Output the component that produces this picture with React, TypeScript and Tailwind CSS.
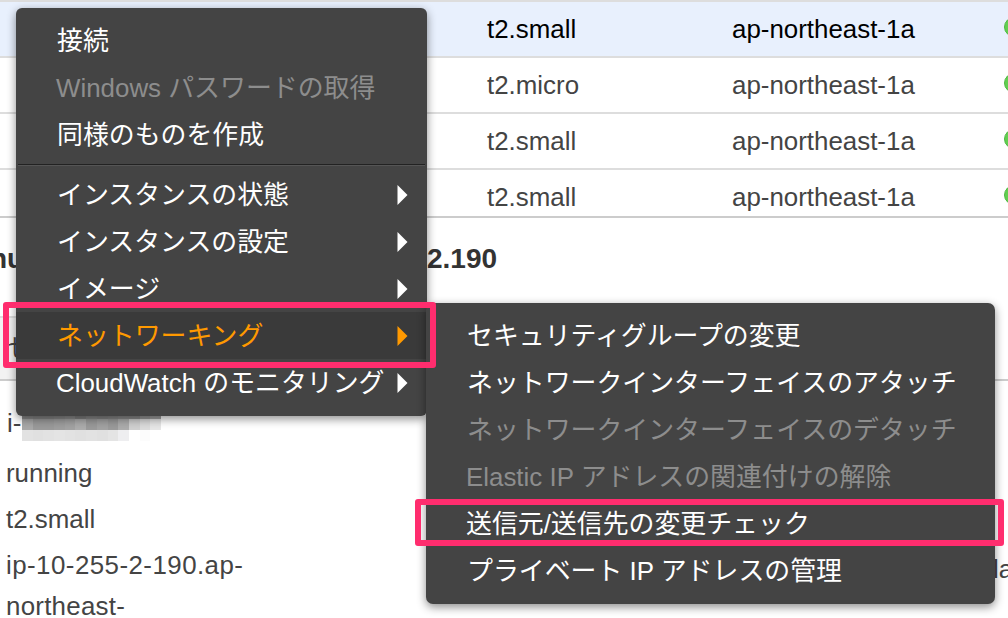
import { FC } from 'react';

const font = "font-['Liberation_Sans','Noto_Sans_CJK_JP',sans-serif]";

const rows = [
  { type: 't2.small', selected: true, height: 'h-[54px]' },
  { type: 't2.micro', selected: false, height: 'h-[54px]' },
  { type: 't2.small', selected: false, height: 'h-[54px]' },
  { type: 't2.small', selected: false, height: 'h-[46px]' },
];

const mosaic = [
  { height: 'h-[6px]', cells: ['#8a8a8a', '#858585', '#858585', '#888888', '#8c8c8c', '#808080', '#888888', '#858585', '#888888', '#8c8c8c', '#8c8c8c', '#999999', '#a0a0a0'] },
  { height: 'h-[11px]', cells: ['#a8a8a8', '#9a9a9a', '#9a9a9a', '#9e9e9e', '#a2a2a2', '#acacac', '#9a9a9a', '#a2a2a2', '#9a9a9a', '#acacac', '#d0d0d0', '#dcdcdc', '#e6e6e6'] },
  { height: 'h-[11px]', cells: ['#e2e2e2', '#e0e0e0', '#e2e2e2', '#e4e4e4', '#e2e2e2', '#e0e0e0', '#e2e2e2', '#e0e0e0', '#e4e4e4', '#eeeef0', '#ffffff', '#fcfcfc', '#ffffff'] },
];

const Arrow: FC<{ color: string }> = ({ color }) => (
  <svg width="11" height="20" viewBox="0 0 11 20" className="absolute left-[381px] top-[14px]">
    <path d="M0.5 0 L10.5 10 L0.5 20 Z" fill={color} />
  </svg>
);

const Item: FC<{
  label: string;
  tone?: 'normal' | 'off' | 'active';
  arrow?: boolean;
  pad: string;
  height: string;
  dark?: boolean;
}> = ({ label, tone = 'normal', arrow, pad, height, dark }) => {
  const text = tone === 'off' ? 'text-[#8d8d8d]' : tone === 'active' ? 'text-[#ff9900]' : 'text-white';
  return (
    <div className={`relative flex items-center whitespace-nowrap pt-[2px] ${pad} ${height} ${text} ${dark ? 'bg-[#3a3a3a]' : ''}`}>
      {label}
      {arrow && <Arrow color={tone === 'active' ? '#ff9900' : '#ffffff'} />}
    </div>
  );
};

const App: FC = () => {
  return (
    <div className={`relative h-[618px] w-[1008px] overflow-hidden bg-white text-[25.9px] leading-none text-[#444] ${font}`}>
      <div className="h-[2px] bg-[#dddddd]" />
      {rows.map((row, i) => (
        <div
          key={i}
          className={`box-content border-b-2 ${row.height} ${i === 3 ? 'border-[#cccccc]' : 'border-[#dddddd]'} ${row.selected ? 'bg-[#e8f0fd] text-black' : ''}`}
        >
          <div className="flex pt-[15px]">
            <div className="w-[487px] shrink-0" />
            <div className="w-[245px] shrink-0">{row.type}</div>
            <div className="w-[272px] shrink-0">ap-northeast-1a</div>
            <div className="h-5 w-5 shrink-0 rounded-full border border-[#4fb842] bg-[#62cf50]" />
          </div>
        </div>
      ))}

      <div className="flex h-[98px] items-start pt-[27px] text-[28px] font-bold text-[#333]">
        <div className="ml-[-10px] w-[437px] shrink-0">nu</div>
        <div>2.190</div>
      </div>

      <div className="h-[65px] border-b-2 border-[#cccccc]">
        <div className="flex h-full w-[120px] items-center border-t-2 border-[#dddddd] bg-[#f2f2f2] pl-[7px]">せ</div>
      </div>

      <div className="flex justify-between pl-[6px] pt-[30px]">
        <div className="w-[400px]">
          <div className="relative h-[46px]">
            <span className="pl-[1px]">i-</span>
            <div className="absolute left-[16px] top-[2px]">
              {mosaic.map((line, y) => (
                <div key={y} className="flex">
                  {line.cells.map((color, x) => (
                    <div key={x} className={`w-[10.7px] ${line.height}`} style={{ backgroundColor: color }} />
                  ))}
                </div>
              ))}
            </div>
          </div>
          <div className="h-[46px] pt-[4px]">running</div>
          <div className="h-[42px] pt-[4px]">t2.small</div>
          <div className="leading-[41px]">
            <span className="tracking-[0.45px]">ip-10-255-2-190.ap-</span>
            <br />
            <span className="tracking-[0.25px]">northeast-</span>
          </div>
        </div>
        <div className="w-[15px] shrink-0 pt-[146px]">la</div>
      </div>

      {/* context menu */}
      <div className="absolute left-[16px] top-[8px] h-[408px] w-[411px] rounded-[6px] bg-[#444444] pt-[10px] shadow-[0_3px_10px_rgba(0,0,0,0.45)]">
        <Item label="接続" pad="pl-[41px]" height="h-[46.7px]" />
        <Item label="Windows パスワードの取得" tone="off" pad="pl-[40px]" height="h-[46.7px]" />
        <Item label="同様のものを作成" pad="pl-[41px]" height="h-[46.6px]" />
        <div className="mx-[2px] mt-[6px] mb-[5px] h-[2px] border-b border-[#555] bg-[#222222]" />
        <Item label="インスタンスの状態" arrow pad="pl-[41px]" height="h-[47px]" />
        <Item label="インスタンスの設定" arrow pad="pl-[41px]" height="h-[47px]" />
        <Item label="イメージ" arrow pad="pl-[41px]" height="h-[47px]" />
        <Item label="ネットワーキング" tone="active" arrow dark pad="pl-[41px]" height="h-[47px]" />
        <Item label="CloudWatch のモニタリング" arrow pad="pl-[40px]" height="h-[47px]" />
      </div>

      {/* submenu */}
      <div className="absolute left-[426px] top-[303px] h-[301px] w-[569px] rounded-[7px] bg-[#444444] pt-[9px] shadow-[0_3px_10px_rgba(0,0,0,0.45)]">
        <Item label="セキュリティグループの変更" pad="pl-[41px]" height="h-[47px]" />
        <Item label="ネットワークインターフェイスのアタッチ" pad="pl-[41px]" height="h-[47px]" />
        <Item label="ネットワークインターフェイスのデタッチ" tone="off" pad="pl-[41px]" height="h-[47px]" />
        <Item label="Elastic IP アドレスの関連付けの解除" tone="off" pad="pl-[40px]" height="h-[47px]" />
        <Item label="送信元/送信先の変更チェック" pad="pl-[40px]" height="h-[47px]" />
        <Item label="プライベート IP アドレスの管理" pad="pl-[41px]" height="h-[47px]" />
      </div>

      {/* annotation boxes */}
      <div className="absolute left-[3px] top-[302px] h-[66px] w-[433px] rounded-[3px] border-[6px] border-[#ff2d6e]" />
      <div className="absolute left-[415px] top-[499px] h-[47px] w-[589px] rounded-[3px] border-[6px] border-[#ff2d6e]" />
    </div>
  );
};

export default App;
